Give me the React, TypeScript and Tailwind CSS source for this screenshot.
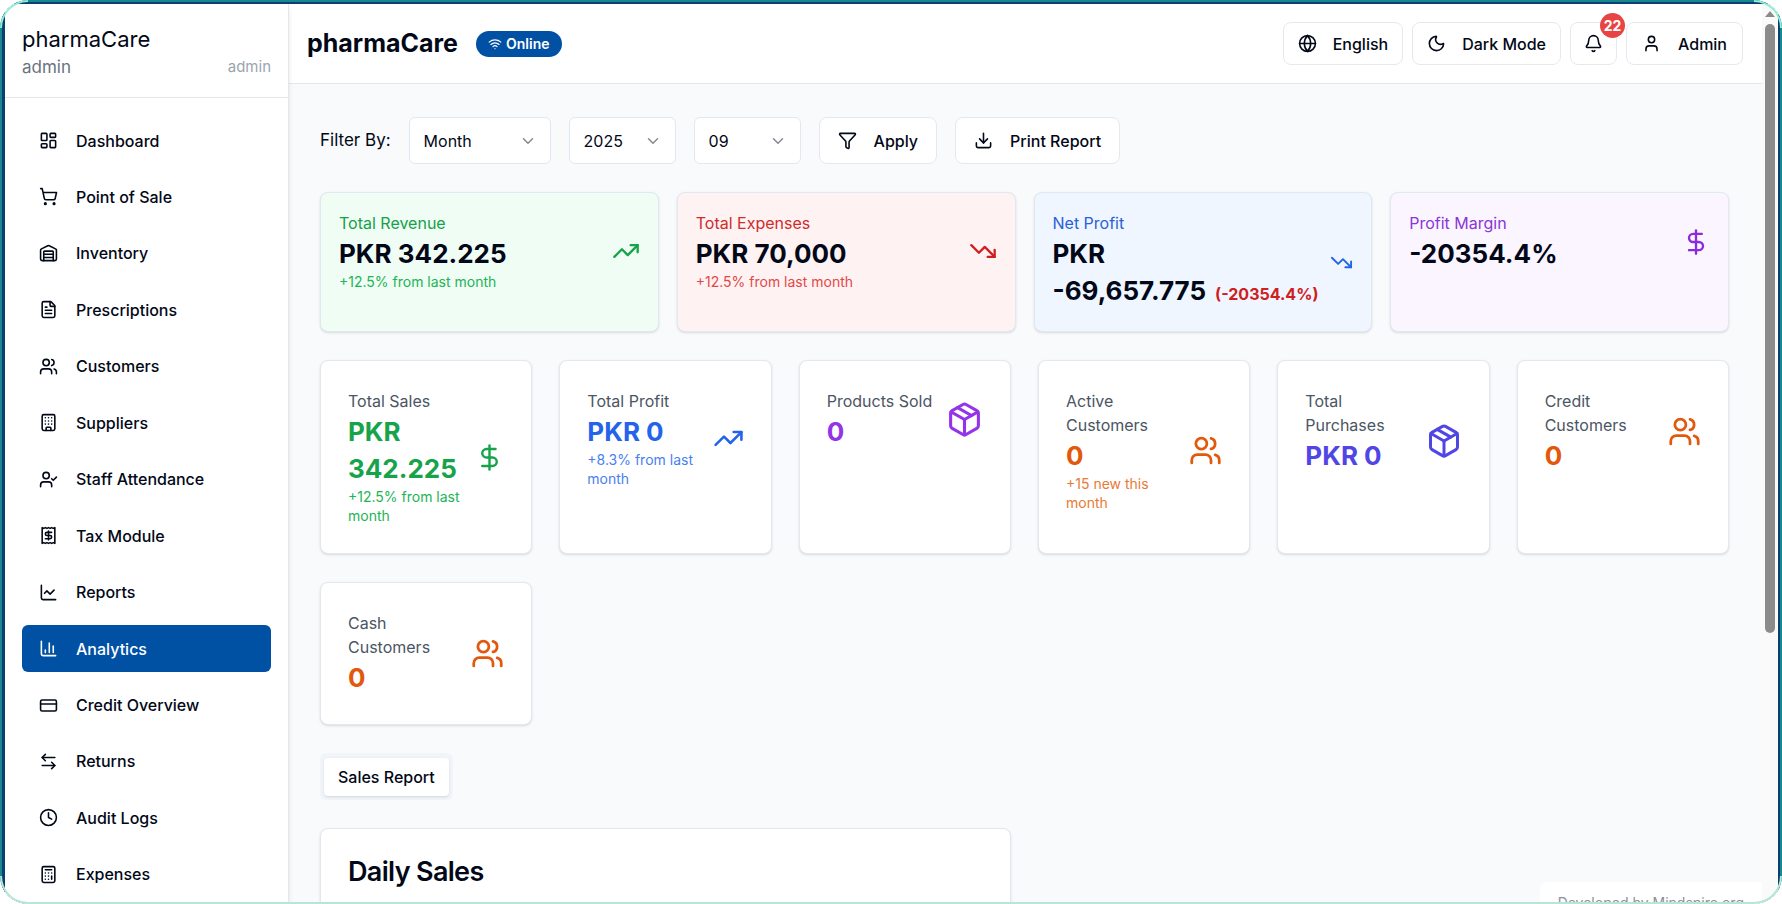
import React from "react";
import {
  ArrowLeftRight,
  Bell,
  Building,
  Calculator,
  ChartColumn,
  ChartLine,
  ChevronDown,
  Clock,
  CreditCard,
  DollarSign,
  Download,
  FileText,
  Funnel,
  Globe,
  LayoutDashboard,
  Moon,
  Package,
  Receipt,
  ShoppingCart,
  TrendingDown,
  TrendingUp,
  User,
  UserCheck,
  Users,
  Warehouse,
  Wifi,
  type LucideIcon,
} from "lucide-react";

const navItems: { label: string; icon: LucideIcon }[] = [
  { label: "Dashboard", icon: LayoutDashboard },
  { label: "Point of Sale", icon: ShoppingCart },
  { label: "Inventory", icon: Warehouse },
  { label: "Prescriptions", icon: FileText },
  { label: "Customers", icon: Users },
  { label: "Suppliers", icon: Building },
  { label: "Staff Attendance", icon: UserCheck },
  { label: "Tax Module", icon: Receipt },
  { label: "Reports", icon: ChartLine },
  { label: "Analytics", icon: ChartColumn },
  { label: "Credit Overview", icon: CreditCard },
  { label: "Returns", icon: ArrowLeftRight },
  { label: "Audit Logs", icon: Clock },
  { label: "Expenses", icon: Calculator },
];

type Summary = {
  label: string;
  value: string;
  extra?: string;
  note?: string;
  icon: LucideIcon;
  size: number;
  card: string;
  labelColor: string;
  noteColor?: string;
  iconColor: string;
};

const summaries: Summary[] = [
  { label: "Total Revenue", value: "PKR 342.225", note: "+12.5% from last month", icon: TrendingUp, size: 28, card: "bg-[#f0fdf4]", labelColor: "text-[#15a04a]", noteColor: "text-[#22b455]", iconColor: "text-[#16a34a]" },
  { label: "Total Expenses", value: "PKR 70,000", note: "+12.5% from last month", icon: TrendingDown, size: 28, card: "bg-[#fef2f2]", labelColor: "text-[#cf2c2c]", noteColor: "text-[#e34848]", iconColor: "text-[#cf2020]" },
  { label: "Net Profit", value: "PKR\n-69,657.775", extra: "(-20354.4%)", icon: TrendingDown, size: 23, card: "bg-[#eff6ff]", labelColor: "text-[#2a60d8]", iconColor: "text-[#2563eb]" },
  { label: "Profit Margin", value: "-20354.4%", icon: DollarSign, size: 28, card: "bg-[#faf5ff]", labelColor: "text-[#8b35d6]", iconColor: "text-[#8b2bdc]" },
];

type Stat = {
  label: string;
  value: string;
  note?: string;
  icon: LucideIcon;
  size: number;
  color: string;
  noteColor?: string;
};

const stats: Stat[] = [
  { label: "Total Sales", value: "PKR\n342.225", note: "+12.5% from last\nmonth", icon: DollarSign, size: 29, color: "text-[#16a34a]", noteColor: "text-[#22b455]" },
  { label: "Total Profit", value: "PKR 0", note: "+8.3% from last\nmonth", icon: TrendingUp, size: 31, color: "text-[#2563eb]", noteColor: "text-[#4a7ff0]" },
  { label: "Products Sold", value: "0", icon: Package, size: 37, color: "text-[#9333ea]" },
  { label: "Active\nCustomers", value: "0", note: "+15 new this\nmonth", icon: Users, size: 33, color: "text-[#e2580c]", noteColor: "text-[#e87a35]" },
  { label: "Total\nPurchases", value: "PKR 0", note: "\u00a0", icon: Package, size: 36, color: "text-[#4f46e5]" },
  { label: "Credit\nCustomers", value: "0", icon: Users, size: 33, color: "text-[#e2580c]" },
  { label: "Cash\nCustomers", value: "0", icon: Users, size: 33, color: "text-[#e2580c]" },
];

function Sidebar() {
  return (
    <aside className="z-10 flex w-[284px] shrink-0 flex-col border-r border-[#e5e7eb] bg-white shadow-md">
      <div className="border-b border-[#e5e7eb] px-[17px] pt-[19px] pb-[18px]">
        <div className="text-[22px] leading-[32px]">pharmaCare</div>
        <div className="flex items-center justify-between leading-[24px]">
          <span className="text-[17px] text-[#6b7280]">admin</span>
          <span className="text-[15px] text-[#9ca3af]">admin</span>
        </div>
      </div>
      <nav className="flex min-h-0 flex-1 flex-col justify-between px-[17px] pt-[19px] pb-[6px]">
        {navItems.map(({ label, icon: Icon }) => (
          <a
            key={label}
            href="#"
            aria-current={label === "Analytics" ? "page" : undefined}
            className={
              label === "Analytics"
                ? "flex h-[47px] shrink-0 items-center gap-[18px] rounded-md bg-[#0050a4] px-[17px] text-[16px] font-medium text-white"
                : "flex h-[47px] shrink-0 items-center gap-[18px] rounded-md px-[17px] text-[16px] font-medium"
            }
          >
            <Icon size={19} />
            {label}
          </a>
        ))}
      </nav>
    </aside>
  );
}

const outlineButton =
  "flex items-center rounded-lg border border-[#e5e9ef] bg-white text-[16px] font-medium";

function Header() {
  return (
    <header className="flex h-[80px] shrink-0 items-center justify-between border-b border-[#e2e8f0] bg-white pr-[19px] pl-[18px]">
      <div className="flex items-center gap-[18px]">
        <h1 className="text-[25px] font-bold">pharmaCare</h1>
        <span className="flex h-[26px] items-center gap-1 rounded-full bg-[#0050a4] px-3 text-[14px] font-semibold text-white">
          <Wifi size={14} />
          Online
        </span>
      </div>
      <div className="flex items-center gap-[9px]">
        <button className={`${outlineButton} h-[43px] gap-[16px] px-[14px]`}>
          <Globe size={19} />
          English
        </button>
        <button className={`${outlineButton} h-[43px] gap-[16px] px-[14px]`}>
          <Moon size={19} />
          Dark Mode
        </button>
        <button aria-label="Notifications" className={`${outlineButton} relative h-[43px] px-[13px]`}>
          <Bell size={19} />
          <span className="absolute -top-[10px] -right-[9px] flex size-[25px] items-center justify-center rounded-full bg-[#e94444] text-[14px] font-bold text-white">
            22
          </span>
        </button>
        <button className={`${outlineButton} h-[43px] gap-[17px] px-[15px]`}>
          <User size={19} />
          Admin
        </button>
      </div>
    </header>
  );
}

function FilterSelect({ label, value, width }: { label: string; value: string; width: string }) {
  return (
    <div className={`relative ${width}`}>
      <select
        aria-label={label}
        className="h-[47px] w-full appearance-none rounded-md border border-[#e2e8f0] bg-white px-[14px] text-[16px]"
      >
        <option>{value}</option>
      </select>
      <ChevronDown size={18} className="pointer-events-none absolute top-[15px] right-[14px] text-[#858a92]" />
    </div>
  );
}

function SummaryCard({ item }: { item: Summary }) {
  const Icon = item.icon;
  return (
    <section className={`flex items-start rounded-lg border border-[#e2e8f0] p-[18px] shadow-sm ${item.card}`}>
      <div className="flex flex-1 items-center justify-between">
        <div>
          <p className={`text-[16px] leading-[24px] ${item.labelColor}`}>{item.label}</p>
          <p className="text-[26px] leading-[37px] font-bold whitespace-pre-line">
            {item.value}
            {item.extra && <span className="ml-[9px] text-[16px] text-[#cf2020]">{item.extra}</span>}
          </p>
          {item.note && <p className={`text-[14px] leading-[19px] ${item.noteColor}`}>{item.note}</p>}
        </div>
        <Icon size={item.size} className={`shrink-0 ${item.iconColor}`} />
      </div>
    </section>
  );
}

function StatCard({ item }: { item: Stat }) {
  const Icon = item.icon;
  return (
    <section className="flex items-start rounded-lg border border-[#e2e8f0] bg-white px-[27px] py-[28px] shadow-sm">
      <div className="flex min-w-0 flex-1 items-center justify-between">
        <div className="whitespace-pre-line">
          <p className="text-[16px] leading-[24px] text-[#4b5563]">{item.label}</p>
          <p className={`text-[26px] leading-[37px] font-bold ${item.color}`}>{item.value}</p>
          {item.note && <p className={`text-[14px] leading-[19px] ${item.noteColor}`}>{item.note}</p>}
        </div>
        <Icon size={item.size} className={`shrink-0 ${item.color}`} />
      </div>
    </section>
  );
}

export default function App() {
  return (
    <div className="h-screen overflow-hidden bg-white font-['Inter',sans-serif] text-[#020817]">
      <div className="relative h-full overflow-hidden rounded-[28px] bg-[#16888e] px-[2px] pt-[2px]">
        <div className="h-full bg-[#0a3f74] pt-[2px] pr-[2px] pl-[3px]">
          <div className="flex h-full overflow-hidden bg-white">
            <Sidebar />
            <div className="flex min-w-0 flex-1 flex-col bg-[#f8fafc]">
              <Header />
              <main className="relative min-h-0 flex-1 overflow-hidden pt-[33px] pr-[33px] pl-[31px]">
                <form className="mb-[28px] flex items-center gap-[18px]" onSubmit={(e) => e.preventDefault()}>
                  <span className="text-[17px]">Filter By:</span>
                  <FilterSelect label="Period" value="Month" width="w-[142px]" />
                  <FilterSelect label="Year" value="2025" width="w-[107px]" />
                  <FilterSelect label="Month" value="09" width="w-[107px]" />
                  <button type="submit" className={`${outlineButton} h-[47px] gap-[17px] px-[18px]`}>
                    <Funnel size={19} />
                    Apply
                  </button>
                  <button type="button" className={`${outlineButton} h-[47px] gap-[17px] px-[18px]`}>
                    <Download size={19} />
                    Print Report
                  </button>
                </form>

                <div className="mb-[28px] grid grid-cols-4 gap-[18px]">
                  {summaries.map((item) => (
                    <SummaryCard key={item.label} item={item} />
                  ))}
                </div>

                <div className="mb-[28px] grid grid-cols-6 gap-x-[27px] gap-y-[28px]">
                  {stats.map((item) => (
                    <StatCard key={item.label} item={item} />
                  ))}
                </div>

                <div role="tablist" className="mb-[28px] flex h-[47px] w-fit items-center rounded-md bg-[#f1f5f9] p-[4px]">
                  <button role="tab" aria-selected="true" className="h-[38px] rounded bg-white px-[14px] text-[16px] font-medium shadow-sm">
                    Sales Report
                  </button>
                </div>

                <div className="grid grid-cols-2 gap-[28px]">
                  <section className="rounded-lg border border-[#e2e8f0] bg-white p-[27px] pb-[120px] shadow-sm">
                    <h2 className="text-[27px] leading-[32px] font-semibold tracking-tight">Daily Sales</h2>
                  </section>
                </div>

                <div className="absolute right-0 -bottom-[20px] rounded-tl-lg bg-white px-[18px] py-[9px] text-[14px] leading-[24px] text-[#8b9099]">
                  Developed by Mindspire.org
                </div>
              </main>
            </div>
            <div className="flex w-[16px] shrink-0 flex-col items-center bg-[#fafafa] pt-[7px]" aria-hidden="true">
              <svg width="10" height="6" viewBox="0 0 10 6" className="mb-[7px]">
                <path d="M5 0 10 6H0Z" fill="#8b8b8b" />
              </svg>
              <div className="h-[609px] w-[10px] rounded-full bg-[#8b8b8b]" />
            </div>
          </div>
        </div>
        <div aria-hidden="true" className="pointer-events-none absolute inset-0 z-20 rounded-[28px] border-b-2 border-[#b2e8d5]" />
        <div aria-hidden="true" className="pointer-events-none absolute top-0 left-0 z-20 size-[28px] rounded-tl-[28px] border-t-2 border-l-2 border-[#8ff0d0]" />
        <div aria-hidden="true" className="pointer-events-none absolute top-0 right-0 z-20 size-[28px] rounded-tr-[28px] border-t-2 border-r-2 border-[#8ff0d0]" />
        <div aria-hidden="true" className="pointer-events-none absolute bottom-0 left-0 z-20 size-[28px] rounded-bl-[28px] border-b-2 border-l-2 border-[#b2e8d5]" />
        <div aria-hidden="true" className="pointer-events-none absolute right-0 bottom-0 z-20 size-[28px] rounded-br-[28px] border-r-2 border-b-2 border-[#b2e8d5]" />
      </div>
    </div>
  );
}
